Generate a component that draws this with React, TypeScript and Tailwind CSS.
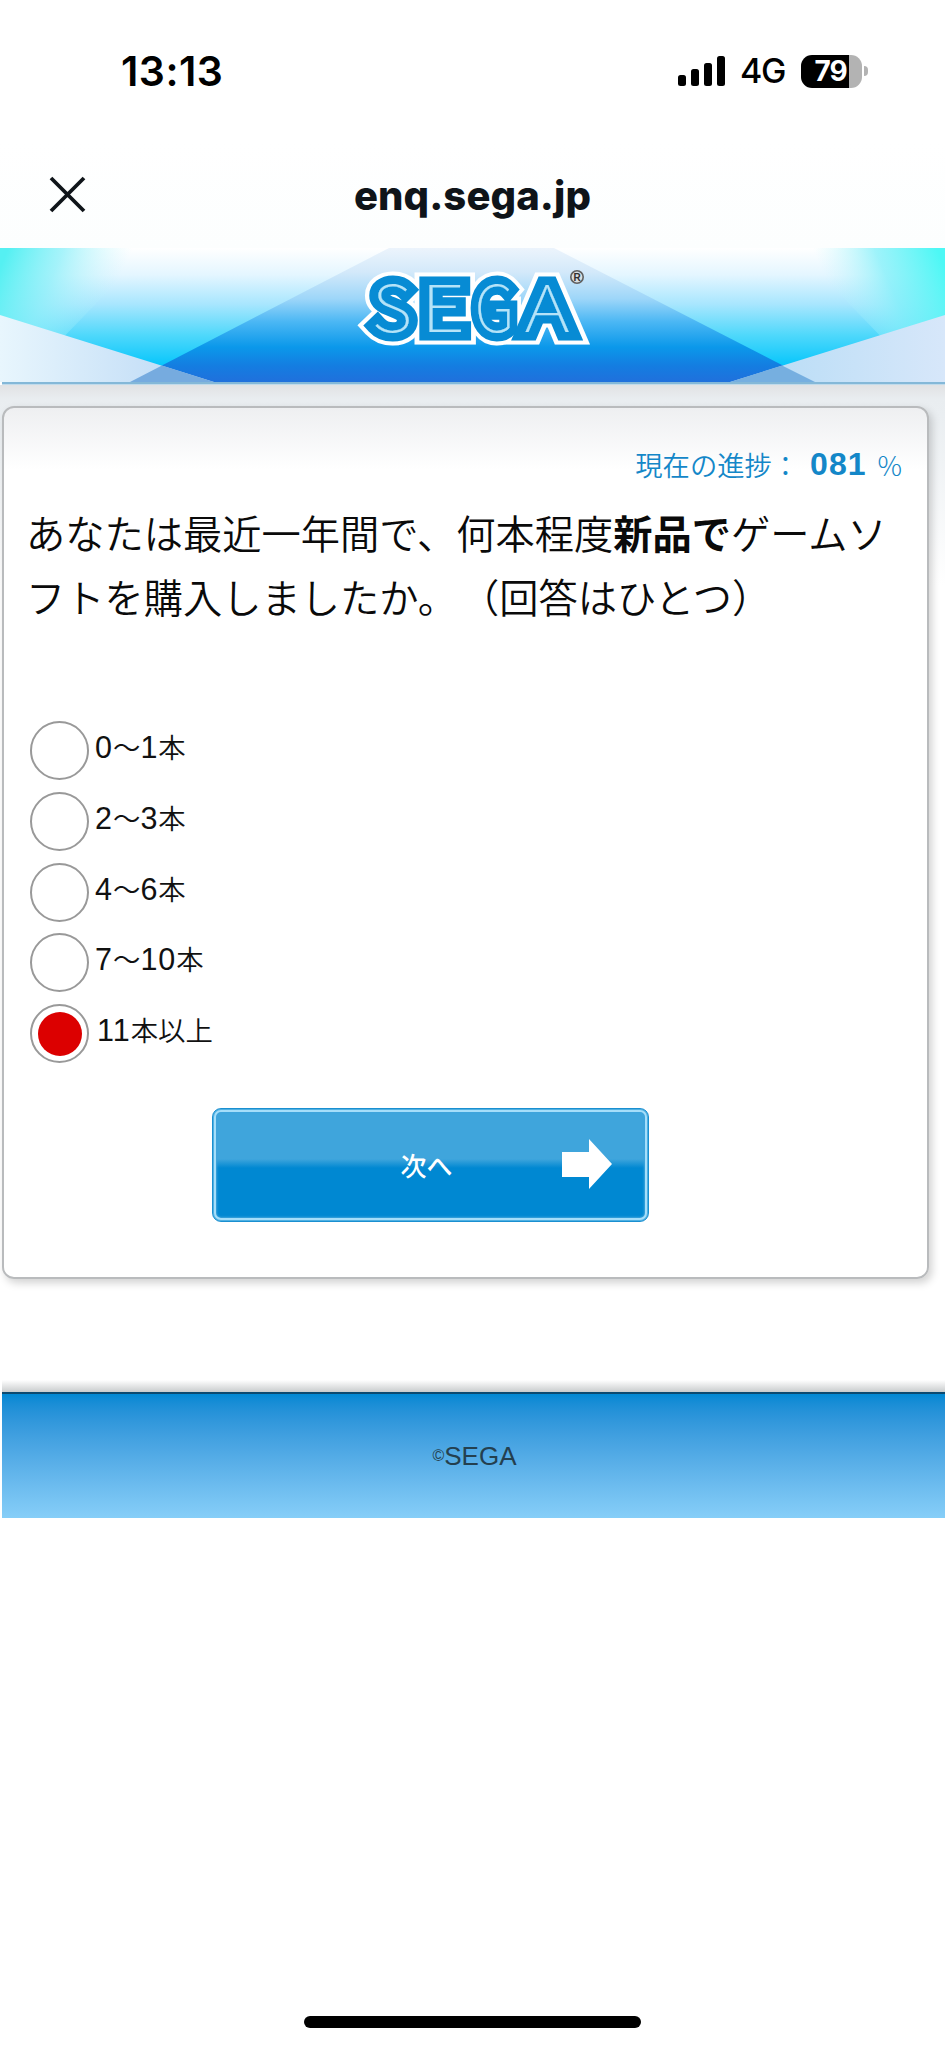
import React from "react";

const options = [
  { parts: [["n", "0"], ["j", "〜"], ["n", "1"], ["j", "本"]], checked: false },
  { parts: [["n", "2"], ["j", "〜"], ["n", "3"], ["j", "本"]], checked: false },
  { parts: [["n", "4"], ["j", "〜"], ["n", "6"], ["j", "本"]], checked: false },
  { parts: [["n", "7"], ["j", "〜"], ["n", "10"], ["j", "本"]], checked: false },
  { parts: [["n", "11"], ["j", "本以上"]], checked: true },
];

function StatusBar() {
  return (
    <div className="flex h-[142px] items-start justify-between pl-[121px] pr-[77px] pt-[46px] font-['Inter',sans-serif] text-black">
      <span className="text-[41px] font-semibold leading-[50px] tracking-[0.5px]">13:13</span>
      <div className="flex h-[50px] items-center">
        <svg width="48" height="32" viewBox="0 0 48 32" className="-mt-px">
          <rect x="0" y="20" width="8" height="11" rx="2.5" />
          <rect x="13" y="14" width="8" height="17" rx="2.5" />
          <rect x="26" y="8" width="8" height="23" rx="2.5" />
          <rect x="39" y="1" width="8" height="30" rx="2.5" />
        </svg>
        <span className="ml-[14px] w-[47px] text-[34px] font-medium leading-[50px] tracking-[-1.2px]">4G</span>
        <div className="ml-[14px] flex h-[33px] w-[61px] items-center justify-center rounded-[11px] bg-[linear-gradient(90deg,#000_0_48px,#b3b3b3_48px)] pr-[2px] text-[28px] font-bold leading-[33px] tracking-[-1.2px] text-white">
          79
        </div>
        <div className="ml-[2px] h-[10px] w-[4px] rounded-r-full bg-[#b3b3b3]" />
      </div>
    </div>
  );
}

function TitleBar() {
  return (
    <div className="flex h-[106px] items-start justify-between bg-linear-to-b from-white to-[#fcfefe] px-[49px] pt-[30px]">
      <svg width="37" height="48" viewBox="0 0 37 48" stroke="#0f1419" strokeWidth="3.8" fill="none">
        <path d="M2 6 35 39M35 6 2 39" />
      </svg>
      <h1 className="font-['Inter',sans-serif] text-[40px] font-extrabold leading-[48px] tracking-[0.1px] text-[#0f1419]">enq.sega.jp</h1>
      <div className="w-[37px]" />
    </div>
  );
}

type Letter = { ch: string; x: number; sx: number; miter: number };

const logoLetters: Letter[] = [
  { ch: "S", x: 392, sx: 1.08, miter: 4 },
  { ch: "E", x: 443, sx: 1.2, miter: 4 },
  { ch: "G", x: 494.5, sx: 0.92, miter: 4 },
  { ch: "A", x: 547, sx: 1.2, miter: 1.9 },
];

function LogoLayer({ color, width }: { color: string; width: number }) {
  return (
    <g fill={color} stroke={color} strokeWidth={width} strokeLinejoin="miter">
      {logoLetters.map((l) => (
        <text
          key={l.ch}
          transform={`translate(${l.x} 84) scale(${l.sx} 1)`}
          textAnchor="middle"
          strokeMiterlimit={l.miter}
          className="font-['Noto_Sans_CJK_JP',sans-serif] text-[65px] font-thin"
        >
          {l.ch}
        </text>
      ))}
    </g>
  );
}

function Banner() {
  return (
    <svg width="945" height="137" viewBox="0 0 945 137" className="block">
      <defs>
        <linearGradient id="side" x1="0" y1="0" x2="0" y2="1">
          <stop offset="0" stopColor="#ffffff" />
          <stop offset="0.2" stopColor="#e4f6ff" />
          <stop offset="0.42" stopColor="#a8e6fe" />
          <stop offset="0.65" stopColor="#4fd8fb" />
          <stop offset="0.9" stopColor="#00c4fb" />
        </linearGradient>
        <linearGradient id="mid" x1="0" y1="0" x2="0" y2="1">
          <stop offset="0" stopColor="#ecf4fc" />
          <stop offset="0.18" stopColor="#d3e9fa" />
          <stop offset="0.38" stopColor="#9dd6f9" />
          <stop offset="0.55" stopColor="#4bb7f4" />
          <stop offset="0.74" stopColor="#0b98ea" />
          <stop offset="0.88" stopColor="#147de1" />
          <stop offset="1" stopColor="#2070dc" />
        </linearGradient>
        <linearGradient id="cyanL" gradientUnits="userSpaceOnUse" x1="0" y1="20" x2="105" y2="65">
          <stop offset="0" stopColor="#55f0f2" />
          <stop offset="0.45" stopColor="#8cf0f9" stopOpacity="0.75" />
          <stop offset="1" stopColor="#c0f5fc" stopOpacity="0" />
        </linearGradient>
        <linearGradient id="cyanR" gradientUnits="userSpaceOnUse" x1="945" y1="20" x2="840" y2="65">
          <stop offset="0" stopColor="#4df8f5" />
          <stop offset="0.5" stopColor="#7ff0f9" stopOpacity="0.75" />
          <stop offset="1" stopColor="#c0f5fc" stopOpacity="0" />
        </linearGradient>
        <linearGradient id="cornerL" x1="0" y1="0" x2="1" y2="0">
          <stop offset="0" stopColor="#e8f6fd" />
          <stop offset="1" stopColor="#b9d7f5" />
        </linearGradient>
        <linearGradient id="cornerR" x1="0" y1="0" x2="1" y2="0">
          <stop offset="0" stopColor="#b3dbf5" />
          <stop offset="1" stopColor="#d7e7fa" />
        </linearGradient>
      </defs>
      <rect width="945" height="134" fill="url(#side)" />
      <path d="M0 0H150L20 134H0Z" fill="url(#cyanL)" />
      <path d="M795 0H945V134H925Z" fill="url(#cyanR)" />
      <path d="M389 0H554L815 134H130Z" fill="url(#mid)" />
      <path d="M0 67 214 134H0Z" fill="url(#cornerL)" />
      <path d="M945 67 730 134H945Z" fill="url(#cornerR)" />
      <path d="M162 117.5 214 134H130Z" fill="#76abdf" />
      <path d="M782 117.5 730 134H815Z" fill="#76afe0" />
      <rect x="2" y="134" width="943" height="2.5" fill="#84b8d8" />
      <LogoLayer color="#ffffff" width={25} />
      <LogoLayer color="#078bd4" width={17} />
      <LogoLayer color="#b5e3f8" width={0.2} />
      <g>
        <circle cx="577" cy="29" r="6.2" fill="#d8dfe2" stroke="#606060" strokeWidth="1.6" />
        <text x="577" y="32.5" textAnchor="middle" className="fill-[#303030] font-['Liberation_Sans',sans-serif] text-[10px] font-bold">R</text>
      </g>
    </svg>
  );
}

function RadioRow({ parts, checked }: { parts: string[][]; checked: boolean }) {
  return (
    <label className="flex h-[70.8px] items-start">
      <span className="flex size-[59px] shrink-0 items-center justify-center rounded-full border-2 border-[#999] bg-white">
        {checked && <span className="size-[44px] rounded-full bg-[#dc0000]" />}
      </span>
      <span className={`${checked ? "ml-[8px]" : "ml-[6px]"} mt-[5px] flex h-[40px] items-baseline leading-[40px] text-[#111]`}>
        {parts.map(([kind, text], i) => (
          <span
            key={i}
            className={
              kind === "n"
                ? "font-['Liberation_Sans',sans-serif] text-[30.5px] tracking-[1px]"
                : "font-['Noto_Sans_CJK_JP',sans-serif] text-[27.4px] font-[350]"
            }
          >
            {text}
          </span>
        ))}
      </span>
    </label>
  );
}

function SurveyCard() {
  return (
    <main className="ml-[2px] h-[873px] w-[927px] rounded-[12px] border-[2.5px] border-[#b9bbbd] bg-[linear-gradient(180deg,#eeeff1_0,#ffffff_62px)] shadow-[3px_4px_9px_rgba(0,0,0,0.18)]">
      <div className="flex h-[83px] items-end justify-end pr-[25px] font-['Noto_Sans_CJK_JP',sans-serif] text-[27.3px] leading-[54px] text-[#1487c8]">
        <span className="font-[350]">現在の進捗：</span>
        <span className="ml-[11px] font-['Liberation_Sans',sans-serif] text-[32px] font-bold tracking-[1px]">081</span>
        <span className="ml-[11px] font-light">%</span>
      </div>
      <p className="mt-[9px] whitespace-nowrap pl-[22px] font-['Noto_Sans_CJK_JP',sans-serif] text-[39.25px] leading-[64px] text-[#0a0a0a] [text-spacing-trim:space-all]">
        <span className="font-[350]">あなたは最近一年間で、何本程度</span>
        <b>新品で</b>
        <span className="font-[350]">ゲームソ</span>
        <br />
        <span className="font-[350]">フトを購入しましたか。</span>
        <span className="ml-[3px] font-[350]">（回答はひとつ）</span>
      </p>
      <div className="mt-[93px] pl-[26px]">
        {options.map((o, i) => (
          <RadioRow key={i} parts={o.parts} checked={o.checked} />
        ))}
      </div>
      <button className="relative ml-[208px] mt-[33px] flex h-[114px] w-[437px] items-center justify-center rounded-[9px] border border-[#1a8fd0] bg-[linear-gradient(180deg,#3fa5dc_0,#3fa5dc_50px,#0088d2_59px,#0088d2_100%)] shadow-[inset_0_0_0_1px_#4fb0e2,inset_0_0_0_3px_#a5defa,inset_0_0_2px_4px_#3fa5dc]">
        <span className="-ml-[8px] font-['Noto_Sans_CJK_JP',sans-serif] text-[26px] font-medium leading-[40px] text-white">次へ</span>
        <svg width="52" height="50" viewBox="0 0 52 50" className="absolute right-[35px] top-[30px]">
          <path d="M1 13H28V0L51 25 28 50V38H1Z" fill="#fff" />
        </svg>
      </button>
    </main>
  );
}

export default function App() {
  return (
    <div className="flex h-[2048px] w-[945px] flex-col overflow-hidden bg-white">
      <StatusBar />
      <TitleBar />
      <Banner />
      <div className="h-[995px] bg-[linear-gradient(180deg,#e1e2e4_0,#e9edf0_14px,#eaeef1_30px,#ffffff_200px)] pt-[21px]">
        <SurveyCard />
      </div>
      <div className="ml-[2px] h-[12px] bg-linear-to-b from-white to-[#c9cccd]" />
      <footer className="ml-[2px] flex h-[126px] items-center justify-center border-t-2 border-[#0c4a70] bg-linear-to-b from-[#0088d3] to-[#86cef8] text-[#24404f]">
        <span className="flex items-center pl-[2px] font-['Liberation_Sans',sans-serif] text-[26px] leading-[30px]">
          <span className="text-[16px]">©</span>SEGA
        </span>
      </footer>
      <div className="mt-auto flex justify-center pb-[20px]">
        <div className="h-[12px] w-[337px] rounded-full bg-black" />
      </div>
    </div>
  );
}
